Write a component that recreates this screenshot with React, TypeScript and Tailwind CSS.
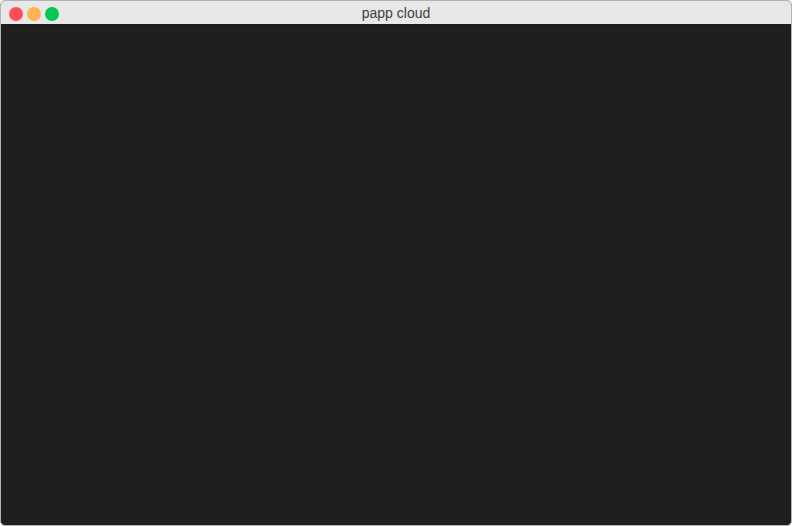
export default function App() {
  return (
    <div className="w-[792px] h-[526px] bg-white">
      <div className="flex h-full flex-col overflow-hidden rounded-[5px] border border-[#b4b4b4] bg-[#1f1f1f]">
        <div className="relative flex h-6 shrink-0 items-center border-b border-[#1a1a1a] bg-[#e8e8e8] px-[8px] pt-[2px]">
          <div className="flex gap-[4px]">
            <span className="h-[14px] w-[14px] rounded-full bg-[#fd4d58]" />
            <span className="h-[14px] w-[14px] rounded-full bg-[#feb455]" />
            <span className="h-[14px] w-[14px] rounded-full bg-[#00c853]" />
          </div>
          <div className="absolute inset-0 flex items-center justify-center pt-[2px] font-['Liberation_Sans',Arial,sans-serif] text-[14px] text-[#404040]">
            papp cloud
          </div>
        </div>
        <div className="flex-1" />
      </div>
    </div>
  );
}
